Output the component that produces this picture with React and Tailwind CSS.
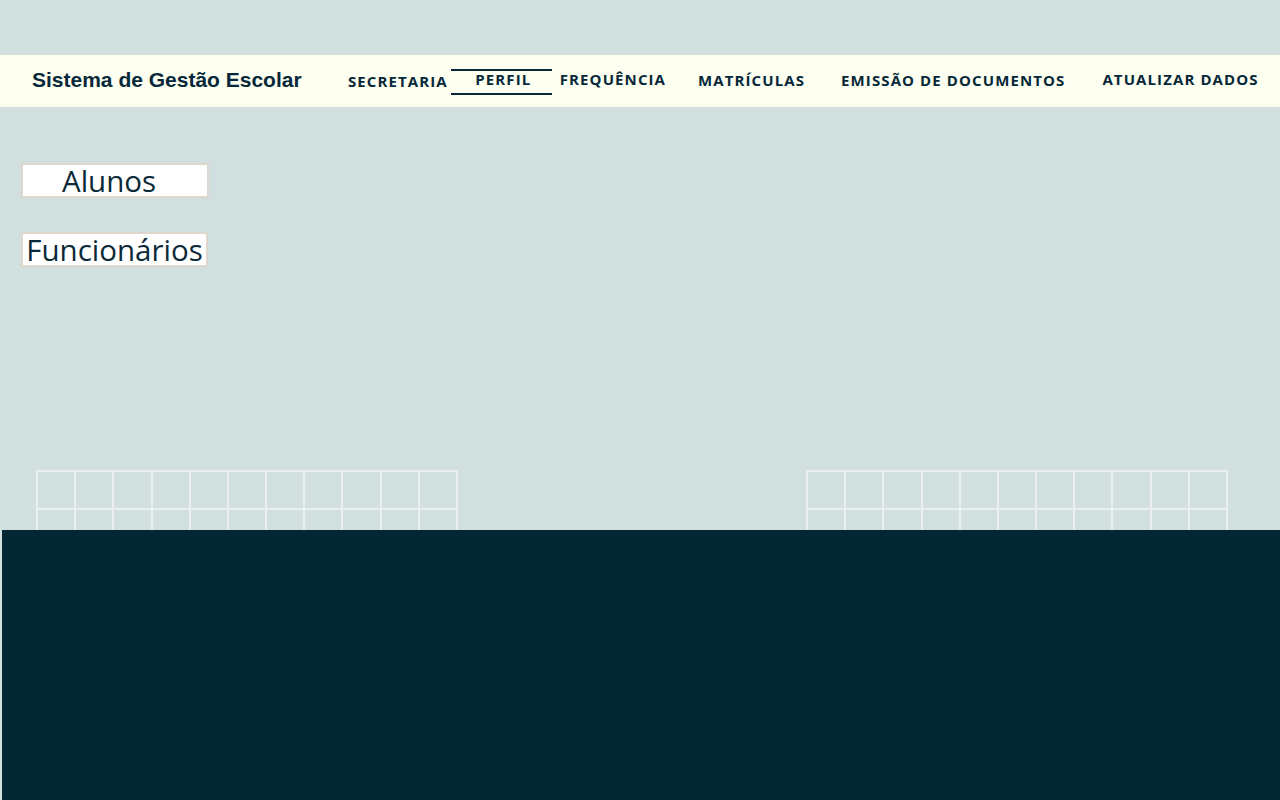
const navItems = [
  { label: 'SECRETARIA', ml: 'ml-0', mt: 'mt-[3px]' },
  { label: 'PERFIL', ml: 'ml-[3px]', mt: 'mt-[4px]', active: true },
  { label: 'FREQUÊNCIA', ml: 'ml-[8px]', mt: 'mt-[-1px]' },
  { label: 'MATRÍCULAS', ml: 'ml-[32px]', mt: 'mt-[1px]' },
  { label: 'EMISSÃO DE DOCUMENTOS', ml: 'ml-[36px]', mt: 'mt-[1px]' },
  { label: 'ATUALIZAR DADOS', ml: 'ml-[37px]', mt: 'mt-[-1px]' },
];

const Grid = ({ className }) => (
  <div className={`w-[422px] grid grid-cols-11 border-l-2 border-t-2 border-[#ebeeee] ${className}`}>
    {[...Array(33)].map((_, i) => (
      <div key={i} className="h-[38px] border-r-2 border-b-2 border-[#ebeeee]" />
    ))}
  </div>
);

export default function App() {
  return (
    <div className="w-[1280px] h-[800px] bg-[#d1dfdf] flex flex-col overflow-hidden" style={{ fontFamily: '"Open Sans", sans-serif' }}>
      <div className="h-[55px]" />

      {/* Header */}
      <header className="h-[52px] bg-[#fdfff1] flex items-center pb-[3px] text-[#062838]">
        <h1 className="ml-[32px] w-[316px] shrink-0 text-[21px] font-bold" style={{ fontFamily: '"Liberation Sans", Arial, sans-serif' }}>
          Sistema de Gestão Escolar
        </h1>
        <nav className="flex items-center text-[15px] font-bold tracking-[1.1px] whitespace-nowrap">
          {navItems.map((item) =>
            item.active ? (
              <div key={item.label} className={`${item.ml} ${item.mt} w-[101px] h-[26px] border-y-2 border-[#062838] flex items-center justify-center pb-[4px]`}>
                <span className="ml-[4px]">{item.label}</span>
              </div>
            ) : (
              <span key={item.label} className={`${item.ml} ${item.mt}`}>{item.label}</span>
            )
          )}
        </nav>
      </header>

      {/* Main */}
      <main className="h-[423px] shrink-0 overflow-hidden flex flex-col">
        <div className="ml-[21px] mt-[56px] flex flex-col gap-[34px] text-[#0b2a38] text-[29.5px]">
          <button className="w-[188px] h-[35px] leading-[31px] bg-white border-2 border-[#ddd7cd] text-left pl-[39px]">Alunos</button>
          <button className="w-[187px] h-[35px] leading-[31px] bg-white border-2 border-[#ddd7cd] text-center">Funcionários</button>
        </div>
        <div className="mt-[203px] flex">
          <Grid className="ml-[36px]" />
          <Grid className="ml-[348px]" />
        </div>
      </main>

      {/* Footer */}
      <footer className="flex-1 ml-[2px] bg-[#032633]" />
    </div>
  );
}
